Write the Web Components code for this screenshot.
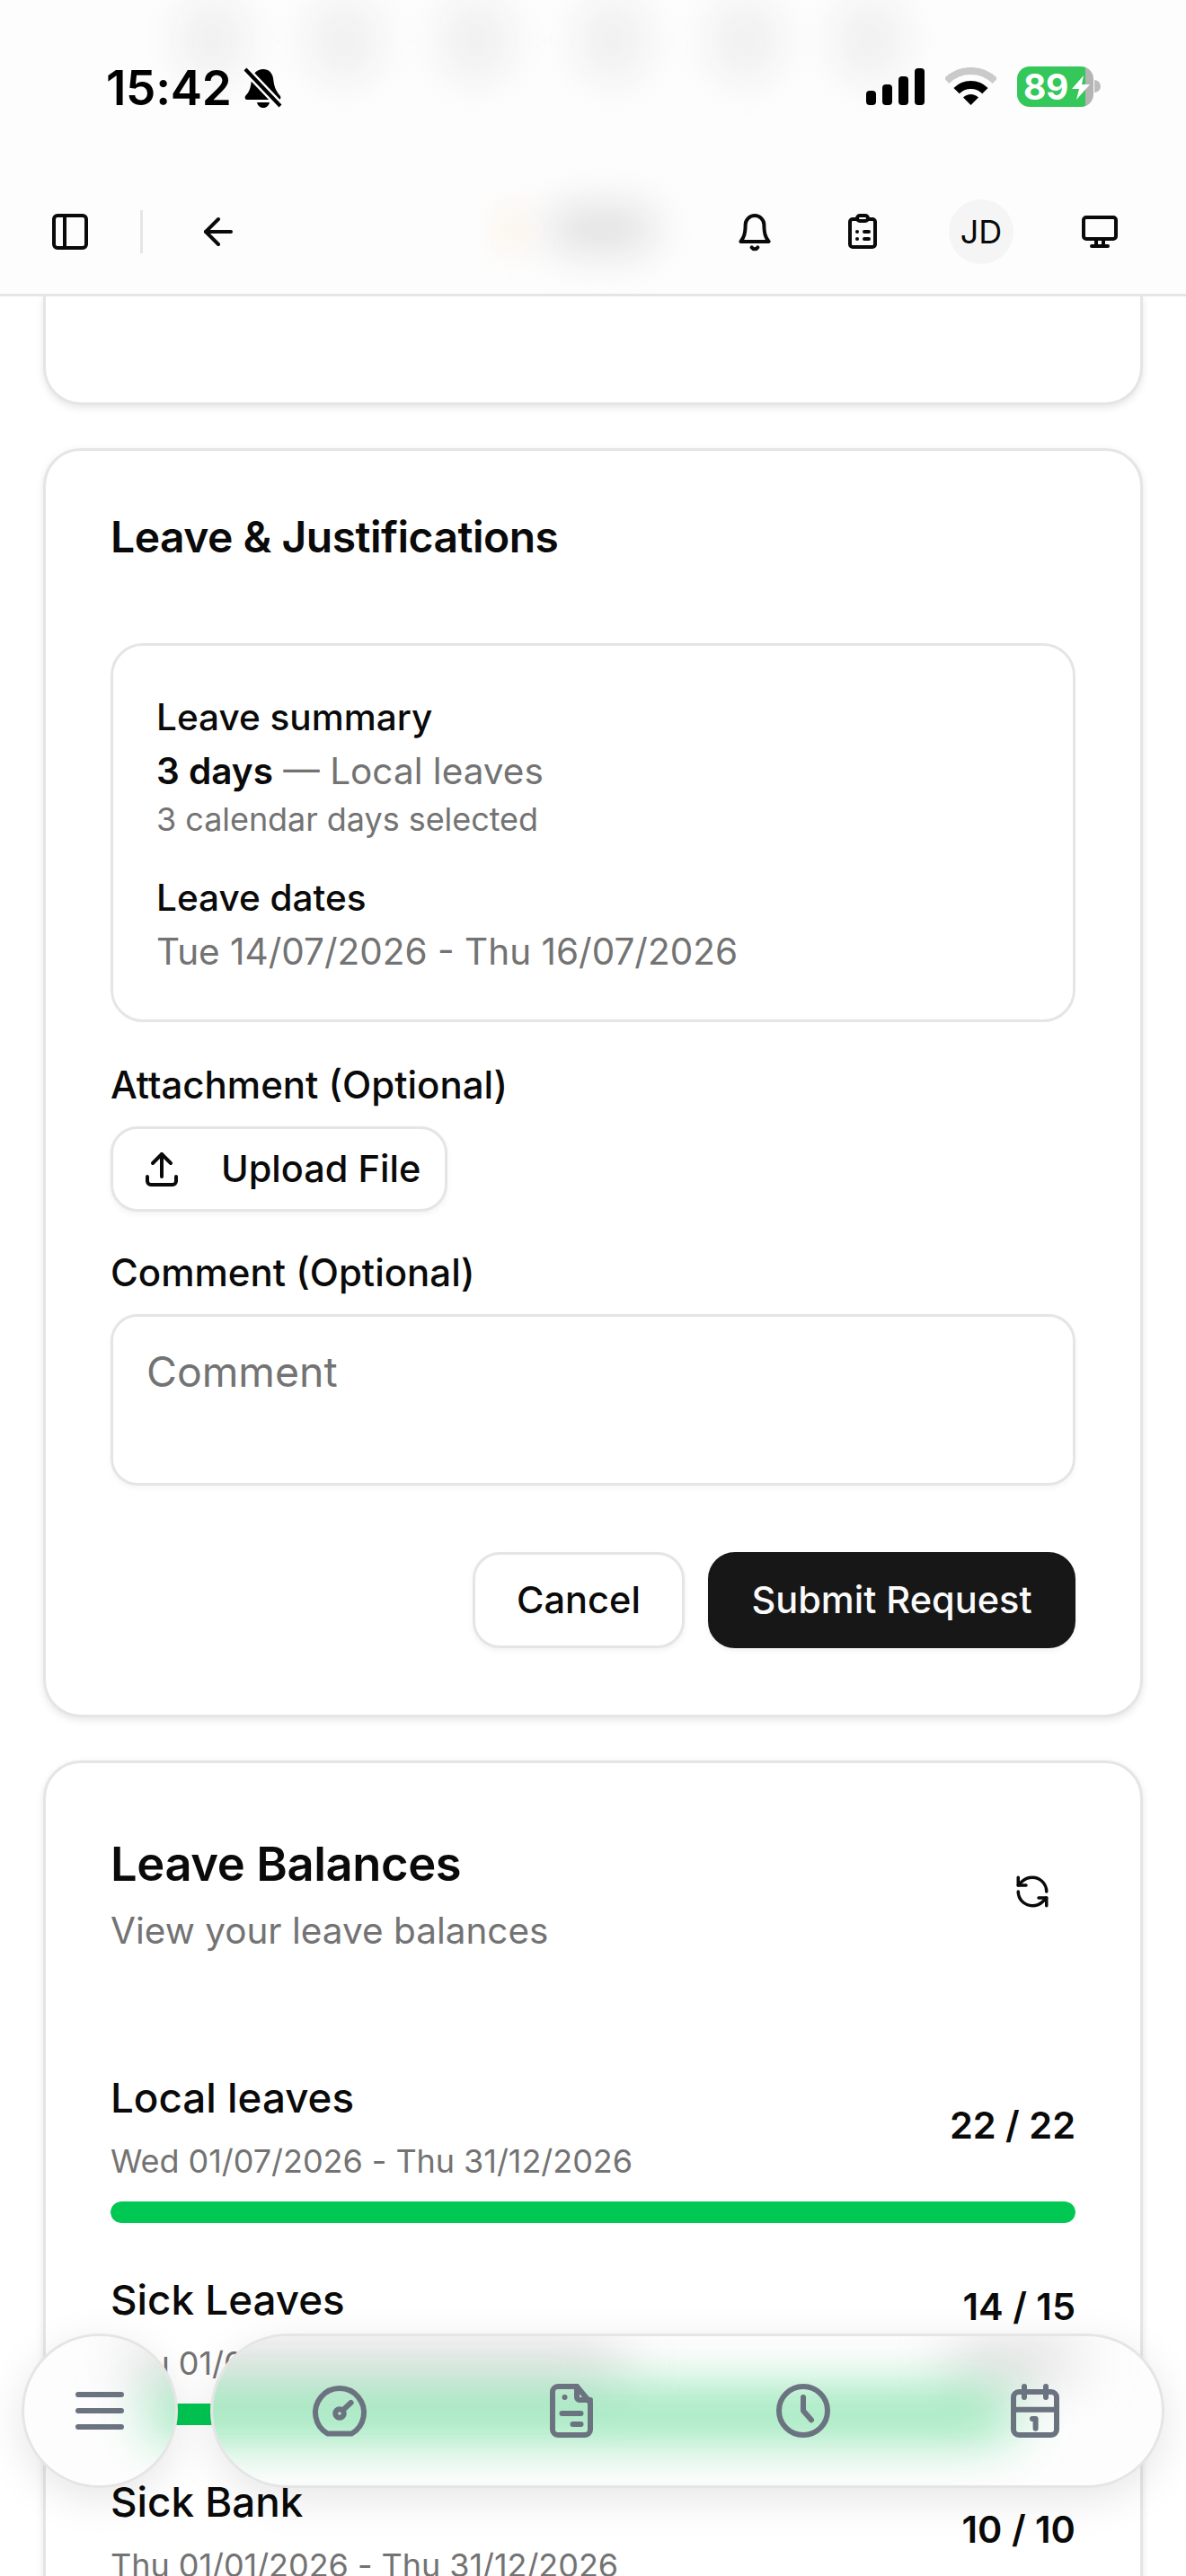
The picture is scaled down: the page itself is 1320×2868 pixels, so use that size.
<!DOCTYPE html>
<html>
<head>
<meta charset="utf-8">
<title>Leave</title>
<style>
  html, body { margin: 0; padding: 0; background: #fff; }
  body { font-family: Inter, "Liberation Sans", sans-serif; color: #0a0a0a; }
</style>
</head>
<body>
<app-page>
  <status-bar slot="top"></status-bar>
  <app-toolbar slot="top"></app-toolbar>

  <app-card tail></app-card>

  <app-card>
    <leave-form></leave-form>
  </app-card>

  <app-card>
    <balances-head></balances-head>
    <balance-item name="Local leaves" dates="Wed 01/07/2026 - Thu 31/12/2026" used="22" total="22"></balance-item>
    <balance-item name="Sick Leaves" dates="Thu 01/01/2026 - Thu 31/12/2026" used="14" total="15" note></balance-item>
    <balance-item name="Sick Bank" dates="Thu 01/01/2026 - Thu 31/12/2026" used="10" total="10"></balance-item>
  </app-card>

  <bottom-nav slot="over"></bottom-nav>
</app-page>

<script>
const ICONS = {
  panel: '<rect x="3" y="3" width="18" height="18" rx="2"/><path d="M9 3v18"/>',
  back: '<path d="m12 19-7-7 7-7"/><path d="M19 12H5"/>',
  bell: '<path d="M10.3 20.7a2 2 0 0 0 3.4 0"/><path d="M6.8 8.2a5.2 5.2 0 0 1 10.4 0c0 5 .8 6.8 2.6 9.3H4.2C6 15 6.8 13.2 6.8 8.2z"/>',
  clipboard: '<rect x="9" y="3" width="6" height="3" rx="1.5"/><path d="M15 5h2.5A1.5 1.5 0 0 1 19 6.5V19a1.5 1.5 0 0 1-1.5 1.500h-11A1.5 1.5 0 0 1 5 19V6.5A1.5 1.5 0 0 1 6.5 5H9"/><path d="M9 12h.01M13 12h2.5M9 16h.01M13 16h2.5"/>',
  monitor: '<rect x="3" y="4" width="18" height="12" rx="1.5"/><path d="M10 16v4M14 16v4M7.5 20h9"/>',
  upload: '<path d="M4 16v2.5a2 2 0 0 0 2 2h12a2 2 0 0 0 2-2V16"/><path d="M7 8.5 12 3.5l5 5"/><path d="M12 3.5V16"/>',
  refresh: '<path d="M21 12a9 9 0 0 0-9-9 9.75 9.75 0 0 0-6.74 2.74L3 8"/><path d="M3 3v5h5"/><path d="M3 12a9 9 0 0 0 9 9 9.75 9.75 0 0 0 6.74-2.74L21 16"/><path d="M16 16h5v5"/>',
  menu: '<path d="M4 6h16M4 12h16M4 18h16"/>',
  gauge: '<path d="M7.5 20.5a9 9 0 1 1 9 0z"/><circle cx="12" cy="13" r="1.6"/><path d="m13.2 11.8 3-2.8"/>',
  file: '<path d="M7 3h7l5 6v10a2 2 0 0 1-2 2H7a2 2 0 0 1-2-2V5a2 2 0 0 1 2-2z"/><path d="M14 3v4a1 1 0 0 0 1 1h4"/><path d="M9.5 7h.01M8.5 13h7M12.5 17h3"/>',
  clock: '<circle cx="12" cy="12" r="9"/><path d="M12 7v5l3 3.4"/>',
  calendar: '<rect x="4" y="5" width="16" height="16" rx="2"/><path d="M8 3v4M16 3v4M4 11.6h16M11 15h1.2v3.6"/>'
};

class LcIcon extends HTMLElement {
  connectedCallback() {
    const size = this.getAttribute('size') || 48;
    const stroke = this.getAttribute('stroke') || 2;
    this.attachShadow({ mode: 'open' }).innerHTML = `
      <style>:host { display: inline-flex; flex: none; width: ${size}px; height: ${size}px; position: relative; } svg { display: block; }</style>
      <svg width="${size}" height="${size}" viewBox="0 0 24 24" fill="none" stroke="currentColor"
        stroke-width="${stroke}" stroke-linecap="round" stroke-linejoin="round">${ICONS[this.getAttribute('name')]}</svg>`;
  }
}
customElements.define('lc-icon', LcIcon);

class AppPage extends HTMLElement {
  connectedCallback() {
    this.attachShadow({ mode: 'open' }).innerHTML = `
      <style>
        :host { display: block; position: relative; width: 1320px; height: 2868px; overflow: hidden; background: #fff; }
        header { background: #fdfdfd; border-bottom: 3px solid #e5e5e5; position: relative; overflow: hidden; }
        main { display: flex; flex-direction: column; gap: 48px; padding: 0 48px; }
      </style>
      <header><slot name="top"></slot></header>
      <main><slot></slot></main>
      <slot name="over"></slot>`;
  }
}
customElements.define('app-page', AppPage);

class StatusBar extends HTMLElement {
  connectedCallback() {
    const blobs = [236, 383, 530, 682, 829, 968].map(x => `<i style="left:${x - 36}px"></i>`).join('');
    this.attachShadow({ mode: 'open' }).innerHTML = `
      <style>
        :host { display: flex; align-items: flex-start; position: relative; height: 207px; padding: 72px 0 0 118px; box-sizing: border-box; }
        i { position: absolute; top: 0; width: 72px; height: 90px; border-radius: 36px; background: #eeeeee; filter: blur(24px); }
        .time { position: relative; font: 600 53px/52px Inter, sans-serif; letter-spacing: -0.3px; color: #000; }
        .mute { position: relative; margin: 3px 0 0 14px; }
        .right { position: absolute; left: 964px; top: 74px; width: 262px; height: 46px; }
        .signal { position: absolute; left: 0; top: 2px; display: flex; align-items: flex-end; gap: 7px; height: 41px; }
        .signal b { width: 11px; border-radius: 4px; background: #000; }
        .wifi { position: absolute; left: 88px; top: 1px; }
        .battery { position: absolute; left: 168px; top: 0; width: 85px; height: 45px; border-radius: 14px; box-sizing: border-box; padding-left: 7px;
          background: linear-gradient(90deg, #34c759 0 76px, #b4b4b4 76px); color: #fff; font: 700 39px/45px Inter, sans-serif; letter-spacing: -0.5px; }
        .bolt { position: absolute; left: 61px; top: 10px; }
        .nub { position: absolute; left: 254px; top: 15px; width: 7px; height: 14px; border-radius: 0 7px 7px 0; background: #bdbdbd; }
      </style>
      ${blobs}
      <span class="time">15:42</span>
      <svg class="mute" width="43" height="46" viewBox="0 0 43 46">
        <path d="M22 2c6 0 10 4 11 10 1 8 2 13 8 20 1 2 0 4-2 4H4c-2 0-3-2-2-4 5-5 6-10 7-18 1-7 6-12 13-12z"/>
        <path d="M15 39h14c-1 4-4 6-7 6s-6-2-7-6z"/>
        <path d="M2 2l39 41" stroke="#fff" stroke-width="9"/>
        <path d="M2 2l39 41" stroke="#000" stroke-width="4"/>
      </svg>
      <div class="right">
        <div class="signal"><b style="height:16px"></b><b style="height:23px"></b><b style="height:32px"></b><b style="height:41px"></b></div>
        <svg class="wifi" width="57" height="42" viewBox="0 0 57 42">
          <path d="M1.6 15.1A38 38 0 0 1 55.4 15.1" fill="none" stroke="#cacaca" stroke-width="8"/>
          <path d="M12.6 26.1A22.5 22.5 0 0 1 44.4 26.1" fill="none" stroke="#000" stroke-width="9"/>
          <path d="M28.5 42 20 33.5A12 12 0 0 1 37 33.5z"/>
        </svg>
        <div class="battery">89
          <svg class="bolt" width="20" height="27" viewBox="0 0 20 27"><path fill="#fff" d="M13 0 0 15h8L5 27 20 10h-9z"/></svg>
        </div>
        <div class="nub"></div>
      </div>`;
  }
}
customElements.define('status-bar', StatusBar);

class AppToolbar extends HTMLElement {
  connectedCallback() {
    this.attachShadow({ mode: 'open' }).innerHTML = `
      <style>
        :host { display: flex; align-items: center; position: relative; padding: 0 72px 18px 54px; height: 102px; color: #0a0a0a; }
        .rule { width: 3px; height: 48px; background: #e5e5e5; margin: 0 60px 0 54px; }
        .blob { position: absolute; left: 610px; top: 24px; width: 120px; height: 48px; border-radius: 24px; background: #dedede; filter: blur(24px); }
        .blob2 { position: absolute; left: 556px; top: 24px; width: 28px; height: 48px; background: #fcf2e6; filter: blur(16px); }
        .fill { flex: 1; }
        .ends { display: flex; align-items: center; gap: 72px; }
        .avatar { width: 72px; height: 72px; border-radius: 50%; background: #f5f5f5; display: flex; align-items: center; justify-content: center; font: 400 36px/1 Inter, sans-serif; }
      </style>
      <div class="blob"></div><div class="blob2"></div>
      <lc-icon name="panel"></lc-icon>
      <div class="rule"></div>
      <lc-icon name="back"></lc-icon>
      <div class="fill"></div>
      <div class="ends">
        <lc-icon name="bell"></lc-icon>
        <lc-icon name="clipboard"></lc-icon>
        <div class="avatar">JD</div>
        <lc-icon name="monitor"></lc-icon>
      </div>`;
  }
}
customElements.define('app-toolbar', AppToolbar);

class AppCard extends HTMLElement {
  connectedCallback() {
    this.attachShadow({ mode: 'open' }).innerHTML = `
      <style>
        :host { display: block; box-sizing: border-box; background: #fff; border: 3px solid #e5e5e5; border-radius: 42px; padding: 72px;
          box-shadow: 0 3px 9px rgba(0,0,0,.10); }
        :host([tail]) { height: 121px; padding: 0; border-top: 0; border-radius: 0 0 42px 42px; }
      </style>
      <slot></slot>`;
  }
}
customElements.define('app-card', AppCard);

class LeaveForm extends HTMLElement {
  connectedCallback() {
    this.attachShadow({ mode: 'open' }).innerHTML = `
      <style>
        :host { display: block; padding-bottom: 2px; }
        h2 { margin: -6px 0 0; font: 600 48px/60px Inter, sans-serif; letter-spacing: -0.5px; color: #0a0a0a; }
        .summary { margin-top: 88px; border: 3px solid #e5e5e5; border-radius: 36px; padding: 50px 48px 0; height: 422px; box-sizing: border-box; }
        .t { font: 450 40.5px/60px Inter, sans-serif; }
        .v { font: 400 40.5px/60px Inter, sans-serif; color: #737373; }
        .v b { font-weight: 600; color: #0a0a0a; }
        .s { font: 400 36px/46px Inter, sans-serif; color: #737373; letter-spacing: -0.05px; }
        .dates { margin-top: 35px; }
        label { display: block; font: 450 42px/60px Inter, sans-serif; }
        .up { margin-top: 40px; }
        .btn { display: inline-flex; align-items: center; box-sizing: border-box; height: 95px; border: 3px solid #e5e5e5; border-radius: 30px; background: #fff;
          box-shadow: 0 3px 6px rgba(0,0,0,.05); font: 450 41.5px/1 Inter, sans-serif; color: #0a0a0a; }
        .file { width: 375px; padding-left: 30px; gap: 42px; margin-top: 16px; }
        .cm { margin-top: 38px; }
        .area { box-sizing: border-box; height: 191px; margin-top: 16px; border: 3px solid #e5e5e5; border-radius: 30px; padding: 31px 37px;
          font: 400 46.4px/60px Inter, sans-serif; color: #737373; box-shadow: 0 3px 6px rgba(0,0,0,.04); }
        .acts { display: flex; justify-content: flex-end; gap: 26px; margin-top: 74px; }
        .acts .btn { height: 107px; justify-content: center; }
        .cancel { width: 236px; }
        .submit { width: 409px; background: #171717; border-color: #171717; color: #fafafa; }
      </style>
      <h2>Leave &amp; Justifications</h2>
      <div class="summary">
        <div class="t">Leave summary</div>
        <div class="v"><b>3 days</b> — Local leaves</div>
        <div class="s">3 calendar days selected</div>
        <div class="t dates">Leave dates</div>
        <div class="v">Tue 14/07/2026 - Thu 16/07/2026</div>
      </div>
      <label class="up">Attachment (Optional)</label>
      <div class="btn file"><lc-icon name="upload"></lc-icon>Upload File</div>
      <label class="cm">Comment (Optional)</label>
      <div class="area">Comment</div>
      <div class="acts">
        <div class="btn cancel">Cancel</div>
        <div class="btn submit">Submit Request</div>
      </div>`;
  }
}
customElements.define('leave-form', LeaveForm);

class BalancesHead extends HTMLElement {
  connectedCallback() {
    this.attachShadow({ mode: 'open' }).innerHTML = `
      <style>
        :host { display: flex; justify-content: space-between; align-items: center; margin: 7px 0 126px; }
        h2 { margin: 0; font: 600 52.5px/66px Inter, sans-serif; letter-spacing: -0.4px; color: #0a0a0a; }
        p { margin: 12px 0 0; font: 400 40.5px/60px Inter, sans-serif; color: #737373; }
        lc-icon { margin: 0 27px 10px 0; }
      </style>
      <div><h2>Leave Balances</h2><p>View your leave balances</p></div>
      <lc-icon name="refresh" size="42"></lc-icon>`;
  }
}
customElements.define('balances-head', BalancesHead);

class BalanceItem extends HTMLElement {
  connectedCallback() {
    const used = Number(this.getAttribute('used'));
    const total = Number(this.getAttribute('total'));
    // the second count sits higher, something under it is hidden by the nav
    const note = this.hasAttribute('note') ? '<div class="note"></div>' : '';
    this.attachShadow({ mode: 'open' }).innerHTML = `
      <style>
        :host { display: block; margin-bottom: 56px; }
        .row { display: flex; justify-content: space-between; align-items: center; }
        .name { font: 450 45.75px/60px Inter, sans-serif; }
        .dates { margin-top: 10px; font: 400 36px/60px Inter, sans-serif; color: #737373; letter-spacing: -0.05px; }
        .right { display: flex; flex-direction: column; align-items: flex-end; padding-bottom: 10px; }
        .count { font: 600 41.5px/60px Inter, sans-serif; }
        .note { height: 46px; }
        .track { height: 24px; margin-top: 15px; border-radius: 12px; background: #f5f5f5; overflow: hidden; }
        .fill { height: 100%; border-radius: 12px; background: #00c853; width: ${used / total * 100}%; }
      </style>
      <div class="row">
        <div><div class="name">${this.getAttribute('name')}</div><div class="dates">${this.getAttribute('dates')}</div></div>
        <div class="right"><div class="count">${used} / ${total}</div>${note}</div>
      </div>
      <div class="track"><div class="fill"></div></div>`;
  }
}
customElements.define('balance-item', BalanceItem);

class BottomNav extends HTMLElement {
  connectedCallback() {
    this.attachShadow({ mode: 'open' }).innerHTML = `
      <style>
        :host { position: absolute; left: 24px; right: 24px; bottom: 98px; display: flex; gap: 36px; height: 172px; color: #6b7280; }
        .wrap { border-radius: 86px; box-shadow: 0 12px 48px rgba(0,0,0,.10); }
        .glass { box-sizing: border-box; height: 172px; border: 3px solid #e5e5e5; border-radius: 86px; position: relative; overflow: hidden;
          background: #fdfdfd; display: grid; align-items: center; justify-items: center; }
        .menu { width: 174px; }
        .tabs { width: 1062px; grid-template-columns: repeat(4, 1fr); padding: 0 12px; }
        /* frosted look: what lies under the glass, blurred */
        .g { position: absolute; filter: blur(32px); }
        .green { top: 75px; height: 24px; background: #00c853; }
        .grey { top: 17px; height: 26px; background: #c4c4c4; }
      </style>
      <div class="wrap">
        <div class="glass menu">
          <div class="g grey" style="left:116px;width:120px"></div>
          <div class="g green" style="left:143px;width:120px"></div>
          <lc-icon name="menu" size="72" stroke="2"></lc-icon>
        </div>
      </div>
      <div class="wrap">
        <div class="glass tabs">
          <div class="g grey" style="left:-120px;width:573px"></div>
          <div class="g grey" style="left:823px;width:137px;top:14px"></div>
          <div class="g green" style="left:-120px;width:1008px"></div>
          <lc-icon name="gauge" size="72" stroke="2"></lc-icon>
          <lc-icon name="file" size="72" stroke="2"></lc-icon>
          <lc-icon name="clock" size="72" stroke="2"></lc-icon>
          <lc-icon name="calendar" size="72" stroke="2"></lc-icon>
        </div>
      </div>`;
  }
}
customElements.define('bottom-nav', BottomNav);
</script>
</body>
</html>
